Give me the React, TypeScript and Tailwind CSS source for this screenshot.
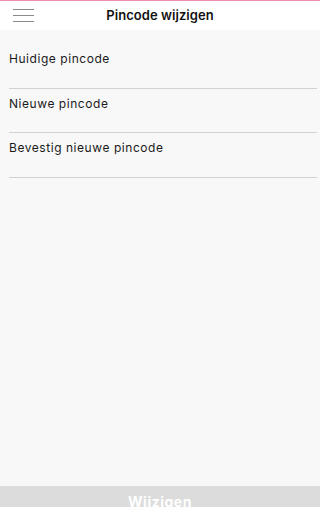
import React from 'react';

const FIELDS = ['Huidige pincode', 'Nieuwe pincode', 'Bevestig nieuwe pincode'];

export default function App() {
  return (
    <div className="flex flex-col w-full h-[524px] bg-[#f8f8f8] font-['Inter',sans-serif]">
      {/* Header */}
      <div className="bg-white border-t border-[#f28db2] h-[30px] shrink-0 relative flex items-center justify-center">
        <button className="absolute left-[13px] top-[8px] flex flex-col gap-[4.7px]">
          <span className="block w-[21px] h-[1.3px] bg-[#8a8a8a]" />
          <span className="block w-[21px] h-[1.3px] bg-[#8a8a8a]" />
          <span className="block w-[21px] h-[1.3px] bg-[#8a8a8a]" />
        </button>
        <h1 className="text-[13px] font-semibold text-[#111] tracking-[0.05px]">Pincode wijzigen</h1>
      </div>

      {/* Form */}
      <div className="flex-1 pt-[14px]">
        {FIELDS.map(label => (
          <div key={label} className="ml-[9px] mr-[3px] h-[44.5px] border-b-[1.3px] border-[#d2d2d2] pt-[8px]">
            <div className="text-[12px] text-[#1a1a1a] leading-[14px] tracking-[0.55px]">{label}</div>
          </div>
        ))}
      </div>

      {/* Button */}
      <div className="h-[38px] shrink-0 bg-[#dcdcdc] flex justify-center pt-[8px]">
        <span className="text-[14px] font-bold text-white leading-[16px] tracking-[0.5px]">Wijzigen</span>
      </div>
    </div>
  );
}
